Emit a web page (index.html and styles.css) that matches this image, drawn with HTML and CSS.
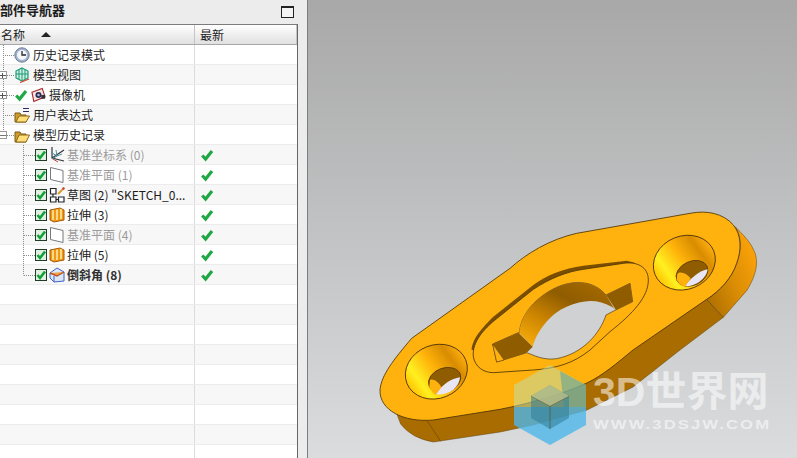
FILE: index.html
```html
<!DOCTYPE html>
<html lang="zh-CN">

<head>
    <meta charset="UTF-8">
    <meta name="viewport" content="width=device-width, initial-scale=1.0">
    <title>部件导航器</title>
    <link rel="stylesheet" href="styles.css">
</head>

<body>
    <svg class="defs" width="0" height="0">
        <defs>
            <symbol id="ok" viewBox="0 0 14 14">
                <path d="M2.2 7.5 L5.6 11 L12 3" fill="none" stroke="#1fa843" stroke-width="3.2" />
            </symbol>
            <symbol id="box" viewBox="0 0 12 14">
                <rect x="0.5" y="1.5" width="11" height="11" fill="#dff0e0" stroke="#1f3a26" />
                <path d="M2.5 7 L5 10 L10 3.5" fill="none" stroke="#12a03a" stroke-width="2.6" />
            </symbol>
            <symbol id="plane" viewBox="0 0 16 16">
                <path d="M1.5 0.5 L14 3.5 L14 15.5 L1.5 12.5 Z" fill="#fff" stroke="#77797c" />
            </symbol>
            <symbol id="extrude" viewBox="0 0 16 16">
                <path d="M1 3 L11 1 L15 3 L15 13 L5 15 L1 13 Z" fill="#f09a12" stroke="#a85a08" />
                <path d="M4 3 V13 M8 2.5 V13 M12 2 V12" stroke="#fff1c0" stroke-width="1.4" />
            </symbol>
        </defs>
    </svg>

    <div class="app">
        <aside class="panel">
            <div class="panel-title">
                <span>部件导航器</span>
                <i class="max-btn"></i>
            </div>
            <div class="table">
                <div class="head">
                    <div class="head-cell">名称<i class="sort"></i></div>
                    <div class="head-cell pad">最新</div>
                </div>
                <div class="tree">
                    <svg class="guides" width="296" height="240">
                        <path d="M3.5 0 V90 M3 10.5 H14 M3 30.5 H14 M3 50.5 H15 M3 70.5 H14 M3 90.5 H14 M23.5 100 V230.5 M24 110.5 H35 M24 130.5 H35 M24 150.5 H35 M24 170.5 H35 M24 190.5 H35 M24 210.5 H35 M24 230.5 H35" fill="none" stroke="#8a8a8a" stroke-dasharray="1 1" />
                    </svg>

                    <div class="row">
                        <div class="name top">
                            <svg class="ico" viewBox="0 0 16 16"><circle cx="8" cy="8" r="7.2" fill="#9fb3cf" stroke="#6f7d92" /><circle cx="8" cy="8" r="5" fill="#f4f6fa" /><path d="M8 4 V8 H12" fill="none" stroke="#22272e" stroke-width="1.3" /></svg>
                            <span>历史记录模式</span>
                        </div>
                        <div class="latest"></div>
                    </div>
                    <div class="row">
                        <i class="toggle plus"></i>
                        <div class="name top">
                            <svg class="ico" viewBox="0 0 16 16"><path d="M8 1 L14 4 L14 11 L8 14 L2 11 L2 4 Z" fill="#cfeee2" stroke="#1f9b78" stroke-width="1.2" /><path d="M8 1 V14 M2 7 H14 M5 2.5 V12.5 M11 2.5 V12.5" stroke="#1f9b78" fill="none" /><path d="M6 15.5 L15 12" stroke="#d9492e" stroke-width="1.3" /></svg>
                            <span>模型视图</span>
                        </div>
                        <div class="latest"></div>
                    </div>
                    <div class="row">
                        <i class="toggle plus"></i>
                        <div class="name top">
                            <svg class="chk"><use href="#ok" /></svg>
                            <svg class="ico cam" viewBox="0 0 16 16"><path d="M1 5 L12 1 L15 10 L3 15 Z" fill="#f7e3e0" stroke="#a52a32" stroke-width="1.2" /><circle cx="8" cy="8" r="3.2" fill="#2a2f52" /><circle cx="8" cy="8" r="1.3" fill="#b7bfe2" /><rect x="11" y="8" width="4" height="4" fill="#30343a" /></svg>
                            <span>摄像机</span>
                        </div>
                        <div class="latest"></div>
                    </div>
                    <div class="row">
                        <div class="name top">
                            <svg class="ico" viewBox="0 0 16 16"><path d="M1 6 H6 L7 8 H12 V15 H1 Z" fill="#d19a2c" stroke="#7a5a16" /><path d="M2 15 L5 9 H15.500 L12 15 Z" fill="#ffdf7a" stroke="#8d6a18" /><path d="M9 1.500 H15 M9 4.500 H15" stroke="#2a2f60" stroke-width="1.2" /></svg>
                            <span>用户表达式</span>
                        </div>
                        <div class="latest"></div>
                    </div>
                    <div class="row">
                        <i class="toggle"></i>
                        <div class="name top">
                            <svg class="ico" viewBox="0 0 16 16"><path d="M1 5 H6 L7 7 H12 V15 H1 Z" fill="#d19a2c" stroke="#7a5a16" /><path d="M2 15 L5 8 H15.500 L12 15 Z" fill="#ffdf7a" stroke="#8d6a18" /></svg>
                            <span>模型历史记录</span>
                        </div>
                        <div class="latest"></div>
                    </div>

                    <div class="row">
                        <div class="name sub muted">
                            <svg class="box"><use href="#box" /></svg>
                            <svg class="ico" viewBox="0 0 16 16"><path d="M3 0 V11 L15 14 M3 11 L15 3" fill="none" stroke="#33383d" stroke-width="1.200" /><path d="M3 6 L8 9 L3 12 M7 3 L8 9 L13 7" fill="none" stroke="#4b8f9d" /><path d="M4 12 L9 15" stroke="#c8443a" /></svg>
                            <span>基准坐标系 (0)</span>
                        </div>
                        <div class="latest"><svg class="chk"><use href="#ok" /></svg></div>
                    </div>
                    <div class="row">
                        <div class="name sub muted">
                            <svg class="box"><use href="#box" /></svg>
                            <svg class="ico"><use href="#plane" /></svg>
                            <span>基准平面 (1)</span>
                        </div>
                        <div class="latest"><svg class="chk"><use href="#ok" /></svg></div>
                    </div>
                    <div class="row">
                        <div class="name sub">
                            <svg class="box"><use href="#box" /></svg>
                            <svg class="ico" viewBox="0 0 16 16"><path d="M1.500 1.500 H7 V7 H1.500 Z M1.500 10 H7 V15 H1.500 Z M9.500 10 H15 V15 H9.500 Z M4 7 V10 M7 12.500 H9.500" fill="#fff" stroke="#20242a" stroke-width="1.200" /><path d="M9 7 L14 2" stroke="#e2972a" stroke-width="1.800" /><circle cx="14.500" cy="1.500" r="1.200" fill="#c0352c" /></svg>
                            <span>草图 (2) "SKETCH_0...</span>
                        </div>
                        <div class="latest"><svg class="chk"><use href="#ok" /></svg></div>
                    </div>
                    <div class="row">
                        <div class="name sub">
                            <svg class="box"><use href="#box" /></svg>
                            <svg class="ico"><use href="#extrude" /></svg>
                            <span>拉伸 (3)</span>
                        </div>
                        <div class="latest"><svg class="chk"><use href="#ok" /></svg></div>
                    </div>
                    <div class="row">
                        <div class="name sub muted">
                            <svg class="box"><use href="#box" /></svg>
                            <svg class="ico"><use href="#plane" /></svg>
                            <span>基准平面 (4)</span>
                        </div>
                        <div class="latest"><svg class="chk"><use href="#ok" /></svg></div>
                    </div>
                    <div class="row">
                        <div class="name sub">
                            <svg class="box"><use href="#box" /></svg>
                            <svg class="ico"><use href="#extrude" /></svg>
                            <span>拉伸 (5)</span>
                        </div>
                        <div class="latest"><svg class="chk"><use href="#ok" /></svg></div>
                    </div>
                    <div class="row">
                        <div class="name sub strong">
                            <svg class="box"><use href="#box" /></svg>
                            <svg class="ico" viewBox="0 0 16 16"><path d="M1 6 L8 1 L15 5 L15 14 L5 15 L1 11 Z" fill="#dce6f8" stroke="#3f62c8" /><path d="M1 6 L8 9 L15 5" fill="#f2a24a" stroke="#b4562a" stroke-width="1.400" /><path d="M5 9 V15" stroke="#3f62c8" /></svg>
                            <span>倒斜角 (8)</span>
                        </div>
                        <div class="latest"><svg class="chk"><use href="#ok" /></svg></div>
                    </div>

                    <div class="row"><div class="name"></div><div class="latest"></div></div>
                    <div class="row"><div class="name"></div><div class="latest"></div></div>
                    <div class="row"><div class="name"></div><div class="latest"></div></div>
                    <div class="row"><div class="name"></div><div class="latest"></div></div>
                    <div class="row"><div class="name"></div><div class="latest"></div></div>
                    <div class="row"><div class="name"></div><div class="latest"></div></div>
                    <div class="row"><div class="name"></div><div class="latest"></div></div>
                    <div class="row"><div class="name"></div><div class="latest"></div></div>
                    <div class="row last"><div class="name"></div><div class="latest"></div></div>
                </div>
            </div>
        </aside>

        <main class="view">
            <svg class="part" viewBox="-186 -600 1467 1374">
                <defs>
                    <linearGradient id="endFace" x1="0" y1="1" x2="1" y2="0.2">
                        <stop offset="0" stop-color="#a56a00" />
                        <stop offset="0.5" stop-color="#d98c04" />
                        <stop offset="1" stop-color="#ffa50a" />
                    </linearGradient>
                    <linearGradient id="sink" x1="0" y1="0.6" x2="1" y2="0.4">
                        <stop offset="0" stop-color="#ffc000" />
                        <stop offset="0.2" stop-color="#fff020" />
                        <stop offset="0.5" stop-color="#ffb30a" />
                        <stop offset="0.8" stop-color="#d88c00" />
                        <stop offset="1" stop-color="#ffaf10" />
                    </linearGradient>
                    <linearGradient id="wall" x1="0" y1="1" x2="0.8" y2="0">
                        <stop offset="0" stop-color="#ffb40c" />
                        <stop offset="0.4" stop-color="#c98200" />
                        <stop offset="0.7" stop-color="#8f5c00" />
                        <stop offset="1" stop-color="#a56a00" />
                    </linearGradient>
                </defs>

                <!-- side walls -->
                <path d="M80 640 L92 672 Q125 715 190 726 L390 696 L489 675 L651 630 L789 561 L930 450 L1060 352 L1010 298 L600 400 Z" fill="#a96c00" stroke="#5e3f08" stroke-width="1.500" />
                <path d="M1010 298 L1060 352 L1130 272 C1160 225 1168 180 1150 148 C1140 125 1120 105 1095 80 C1115 105 1115 150 1100 190 C1085 235 1050 272 1010 298 Z" fill="url(#endFace)" stroke="#5e3f08" stroke-width="1.500" />
                <path d="M170 660 L212 724" stroke="#6d4700" stroke-width="2" />

                <!-- top face -->
                <path d="M30 570 C34 525 70 480 125 415 L420 205 C470 160 540 118 620 100 L960 40 C1010 30 1060 40 1090 75 C1115 105 1115 150 1100 190 C1085 235 1050 272 1010 298 L789 450 C740 490 700 525 651 549 C570 585 480 610 390 628 L190 660 C100 668 28 630 30 570 Z" fill="#ffb20e" stroke="#4b3208" stroke-width="2.500" />

                <!-- counter sunk holes -->
                <ellipse cx="199" cy="515" rx="95" ry="80" transform="rotate(-22 199 515)" fill="url(#sink)" stroke="#4b3208" stroke-width="2.500" />
                <ellipse cx="224" cy="540" rx="50" ry="36" transform="rotate(-20 224 540)" fill="#8f5c00" stroke="#4b3208" stroke-width="2" />
                <path d="M197 582 C215 555 245 535 270 532 C268 565 230 590 197 582 Z" fill="#e8e6f2" />
                <path d="M178 560 C182 572 190 580 197 585 L214 562 C205 545 190 535 180 540 Z" fill="#ffb20e" />
                <ellipse cx="943" cy="188" rx="95" ry="80" transform="rotate(-22 943 188)" fill="url(#sink)" stroke="#4b3208" stroke-width="2.500" />
                <ellipse cx="966" cy="220" rx="50" ry="36" transform="rotate(-25 966 220)" fill="#8f5c00" stroke="#4b3208" stroke-width="2" />
                <path d="M945 258 C960 235 990 212 1013 208 C1010 235 975 262 945 258 Z" fill="#e8e6f2" />
                <path d="M920 238 C924 250 934 258 945 260 L962 235 C950 220 930 212 922 222 Z" fill="#ffb20e" />

                <!-- pocket -->
                <path d="M305 450 C305 415 345 375 370 350 L490 255 C530 225 580 205 640 197 L770 182 L795 188 L640 215 C580 225 530 245 490 270 L375 360 C345 385 315 420 315 450 Z" fill="#7a4e00" />
                <path d="M310 470 C305 425 345 385 375 360 L490 268 C540 235 590 215 640 208 L760 190 C800 184 835 200 835 240 C835 290 790 340 720 395 L660 450 C610 490 560 505 490 510 L370 518 C340 518 315 500 310 470 Z" fill="#ffb20e" stroke="#4b3208" stroke-width="2.500" />

                <!-- bore with key slots -->
                <path d="M448 400 C452 340 500 290 560 262 C610 240 670 240 708 285 L780 250 L788 305 L733 332 L708 345 C690 400 640 460 560 476 C520 482 490 465 470 458 L380 486 L368 432 L445 398 Z" fill="#cfd1d3" stroke="#4b3208" stroke-width="2" />
                <path d="M448 400 C452 340 500 290 560 262 C610 240 670 240 708 285 L735 330 L728 322 C680 295 640 300 590 320 C540 340 500 395 488 440 Z" fill="url(#wall)" />
                <path d="M708 285 L780 250 L788 305 L738 330 Z" fill="#8f5c00" />
                <path d="M368 432 L445 398 L488 440 L470 458 L402 480 Z" fill="#8f5c00" />
                <path d="M368 432 L380 486 L402 480 Z" fill="#ffb20e" stroke="#4b3208" stroke-width="1.500" />
            </svg>

            <!-- watermark sits over the part -->
            <div class="mark">
                <svg class="mark-hex" viewBox="0 0 72 80">
                    <path d="M36 0 L72 20 L72 42 L0 42 L0 20 Z" fill="#bfdca8" opacity="0.55" />
                    <path d="M46 6 L72 20 L72 42 L50 42 Z" fill="#4d9ea0" opacity="0.5" />
                    <path d="M0 42 L72 42 L72 60 L36 80 L0 60 Z" fill="#4db6ea" opacity="0.8" />
                    <path d="M17 31 L36 20 L55 31 L55 53 L36 64 L17 53 Z" fill="#2f7d96" opacity="0.55" />
                    <path d="M17 31 L36 41 L55 31 M36 41 V64" fill="none" stroke="#5a4a20" stroke-width="1" opacity="0.6" />
                    <path d="M17 31 L36 20 L55 31 L36 41 Z" fill="#c9c88a" opacity="0.7" />
                </svg>
                <div class="mark-text">
                    <div class="mark-big">3D世界网</div>
                    <div class="mark-url">WWW.3DSJW.COM</div>
                </div>
            </div>
        </main>
    </div>
</body>

</html>
```

FILE: styles.css
```css
* {
    box-sizing: border-box;
}

body {
    margin: 0;
    height: 100vh;
    overflow: hidden;
    font-family: "Noto Sans CJK SC", "Liberation Sans", sans-serif;
    font-size: 12px;
    color: #1c1c1c;
}

.defs {
    display: block;
    height: 0;
}

.app {
    display: flex;
    height: 458px;
}

.panel {
    width: 308px;
    flex: none;
    padding-right: 9px;
    background-color: #ececec;
    border-right: 1px solid #7e7e7e;
}

.panel-title {
    display: flex;
    justify-content: space-between;
    align-items: center;
    height: 24px;
    padding-right: 4px;
    padding-bottom: 5px;
    font-size: 13px;
    font-weight: 700;
}

.max-btn {
    width: 13px;
    height: 12px;
    margin-top: 4px;
    background-color: #f4f4f4;
    border: 1px solid #222;
    border-top-width: 2px;
}

.table {
    height: 434px;
    overflow: hidden;
    background-color: #fff;
    border-top: 1px solid #7c7c7c;
    border-right: 1px solid #666;
}

.head {
    display: grid;
    grid-template-columns: 195px 1fr;
    height: 20px;
    background: linear-gradient(#ffffff, #e0e0e0);
    border-bottom: 1px solid #a8a8a8;
}

.head-cell {
    display: flex;
    align-items: center;
    padding-left: 1px;
    border-right: 1px solid #c4c4c4;
}

.pad {
    padding-left: 5px;
}

.sort {
    width: 0;
    height: 0;
    margin-left: 16px;
    border-left: 5px solid transparent;
    border-right: 5px solid transparent;
    border-bottom: 5px solid #222;
}

.tree {
    position: relative;
}

.guides {
    position: absolute;
    left: 0;
    top: 0;
    z-index: 1;
}

.row {
    position: relative;
    display: grid;
    grid-template-columns: 195px 1fr;
    height: 20px;
    border-bottom: 1px solid #ececec;
}

.row:nth-child(odd) {
    background-color: #f7f7f7;
}

/* only 13px of the last row fits in the window */
.row.last {
    height: 13px;
    border-bottom: 0;
}

.name {
    display: flex;
    align-items: center;
    gap: 2px;
    min-width: 0;
    white-space: nowrap;
    border-right: 1px solid #dcdcdc;
}

.top {
    gap: 3px;
    padding-left: 14px;
}

.sub {
    padding-left: 35px;
}

.muted span {
    color: #9b9b9b;
}

.strong span {
    font-weight: 700;
    color: #303030;
}

.latest {
    display: flex;
    align-items: center;
    padding-left: 5px;
}

.ico {
    width: 16px;
    height: 16px;
    flex: none;
}

.cam {
    width: 15px;
}

.chk {
    width: 14px;
    height: 14px;
    flex: none;
}

.box {
    width: 12px;
    height: 14px;
    flex: none;
}

.toggle {
    position: absolute;
    left: 0;
    top: 6px;
    z-index: 2;
    width: 7px;
    height: 8px;
    background: linear-gradient(#777, #777) 0 3px / 6px 1px no-repeat, #fff;
    border: 1px solid #9a9a9a;
    border-left: 0;
}

.plus {
    background: linear-gradient(#555, #555) 0 3px / 6px 1px no-repeat, linear-gradient(#555, #555) 2px 1px / 1px 5px no-repeat, #fff;
}

.view {
    position: relative;
    flex: 1;
    background: linear-gradient(#a8a8a8, #dadcde);
}

.part {
    display: block;
    width: 489px;
    height: 458px;
}

.mark {
    position: absolute;
    left: 206px;
    top: 365px;
    display: flex;
    gap: 7px;
}

.mark-hex {
    width: 72px;
    height: 80px;
    flex: none;
}

.mark-text {
    padding-top: 3px;
    color: #fff;
    opacity: 0.55;
}

.mark-big {
    font-family: "Liberation Sans", "Noto Sans CJK SC", sans-serif;
    font-size: 41px;
    font-weight: 700;
    line-height: 48px;
    white-space: nowrap;
}

.mark-url {
    width: fit-content;
    margin-top: 2px;
    font-family: "Liberation Sans", sans-serif;
    font-size: 12px;
    font-weight: 700;
    letter-spacing: 1.5px;
    white-space: nowrap;
    transform: scaleX(1.39);
    transform-origin: left;
}
```
